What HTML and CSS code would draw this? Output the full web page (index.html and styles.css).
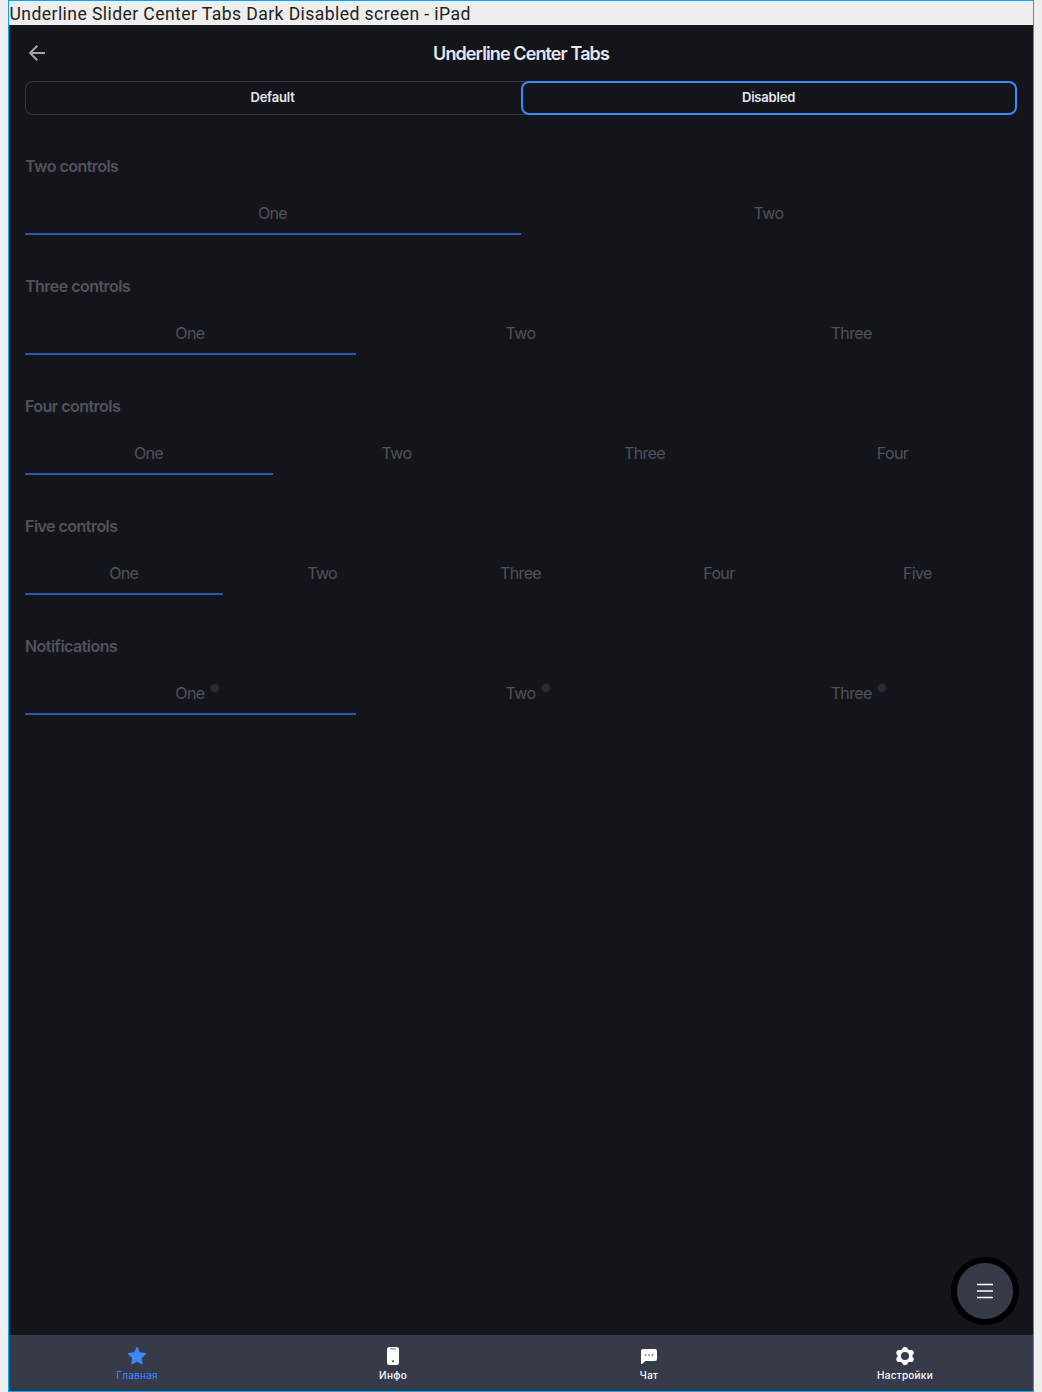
FILE: index.html
```html
<!DOCTYPE html>
<html lang="en">
<head>
<meta charset="utf-8">
<title>Underline Center Tabs</title>
<link rel="stylesheet" href="styles.css">
</head>
<body>
<div class="frame">
  <div class="frame-label"><span>Underline Slider Center Tabs Dark Disabled screen - iPad</span></div>
  <main class="screen">
    <header class="header">
      <svg class="back" viewBox="0 0 24 24" width="24" height="24"><path d="M20 12H5.500M12.300 4.800L5.100 12l7.200 7.200"/></svg>
      <h1 class="title"><span>Underline Center Tabs</span></h1>
    </header>
    <div class="segment">
      <div class="segment-item"><span>Default</span></div>
      <div class="segment-item active"><span>Disabled</span></div>
    </div>
    <section class="group">
      <h2 class="group-title"><span>Two controls</span></h2>
      <div class="tabs"><div class="tab selected"><span>One</span></div><div class="tab"><span>Two</span></div></div>
    </section>
    <section class="group">
      <h2 class="group-title"><span>Three controls</span></h2>
      <div class="tabs"><div class="tab selected"><span>One</span></div><div class="tab"><span>Two</span></div><div class="tab"><span>Three</span></div></div>
    </section>
    <section class="group">
      <h2 class="group-title"><span>Four controls</span></h2>
      <div class="tabs"><div class="tab selected"><span>One</span></div><div class="tab"><span>Two</span></div><div class="tab"><span>Three</span></div><div class="tab"><span>Four</span></div></div>
    </section>
    <section class="group">
      <h2 class="group-title"><span>Five controls</span></h2>
      <div class="tabs"><div class="tab selected"><span>One</span></div><div class="tab"><span>Two</span></div><div class="tab"><span>Three</span></div><div class="tab"><span>Four</span></div><div class="tab"><span>Five</span></div></div>
    </section>
    <section class="group">
      <h2 class="group-title"><span>Notifications</span></h2>
      <div class="tabs"><div class="tab selected"><span class="notify">One</span></div><div class="tab"><span class="notify">Two</span></div><div class="tab"><span class="notify">Three</span></div></div>
    </section>
    <div class="fab">
      <svg viewBox="0 0 24 24" width="24" height="24"><path d="M4 5.500h16M4 12h16M4 18.500h16"/></svg>
    </div>
  </main>
  <nav class="tabbar">
    <div class="nav-item current">
      <svg viewBox="0 0 24 24" width="24" height="24"><path d="M12 3.600l2.500 5.300 5.900.8-4.300 4.100 1 5.900L12 16.900l-5.100 2.800 1-5.900L3.600 9.700l5.900-.8z" fill="currentColor" stroke="currentColor" stroke-width="1.200" stroke-linejoin="round"/></svg>
      <span>Главная</span>
    </div>
    <div class="nav-item">
      <svg viewBox="0 0 24 24" width="24" height="24"><rect x="6" y="3" width="12" height="18" rx="2.500" fill="currentColor"/><path d="M9.500 4.800h5" stroke="#8b8d98" stroke-width="1.200" stroke-linecap="round"/><circle cx="12" cy="17.300" r="1" fill="#373a49"/></svg>
      <span>Инфо</span>
    </div>
    <div class="nav-item">
      <svg viewBox="0 0 24 24" width="24" height="24"><path d="M6 5h12a2 2 0 0 1 2 2v8a2 2 0 0 1-2 2H8.500l-3.200 2.800C4.700 20.300 4 20 4 19.200V7a2 2 0 0 1 2-2z" fill="currentColor"/><g fill="#373a49"><circle cx="8.500" cy="11" r=".8"/><circle cx="12" cy="11" r=".8"/><circle cx="15.500" cy="11" r=".8"/></g></svg>
      <span>Чат</span>
    </div>
    <div class="nav-item">
      <svg viewBox="0 0 24 24" width="24" height="24"><g fill="currentColor"><circle cx="12" cy="12" r="7.300"/><circle cx="12" cy="5.800" r="2.800"/><circle cx="17.800" cy="8.800" r="2.900"/><circle cx="17.800" cy="15.200" r="2.900"/><circle cx="12" cy="18.200" r="2.800"/><circle cx="6.200" cy="15.200" r="2.900"/><circle cx="6.200" cy="8.800" r="2.900"/></g><circle cx="12" cy="12" r="4" fill="#373a49"/></svg>
      <span>Настройки</span>
    </div>
  </nav>
</div>
</body>
</html>
```
FILE: styles.css
```css
* { box-sizing: border-box; }
body {
  margin: 0;
  padding: 0 8px;
  background: #eeeeee;
  font-family: Inter, "Liberation Sans", sans-serif;
}
.frame {
  display: flex;
  flex-direction: column;
  height: 1392px;
  border: 1px solid #00a8f5;
}
.frame-label {
  height: 24px;
  padding-left: 0.5px;
  font: 400 17.6px/27px Roboto, sans-serif;
  letter-spacing: 0.41px;
  color: #222222;
  white-space: nowrap;
}
.screen {
  position: relative;
  flex: 1;
  padding: 0 16px;
  background: #14151a;
}
.header {
  display: grid;
  grid-template-columns: 24px 1fr 24px;
  align-items: center;
  height: 56px;
}
.back {
  fill: none;
  stroke: #a2a4b1;
  stroke-width: 2;
}
.title {
  margin: 0;
  padding-top: 2px;
  text-align: center;
  font-size: 18px;
  line-height: 24px;
  font-weight: 600;
  letter-spacing: -0.89px;
  color: #e4e7f0;
}
.segment {
  display: flex;
  height: 34px;
  border-radius: 8px;
  box-shadow: inset 0 0 0 1px #343643;
}
.segment-item {
  flex: 1;
  padding-right: 1px;
  text-align: center;
  font-size: 13px;
  line-height: 33px;
  font-weight: 600;
  letter-spacing: -0.2px;
  color: #e4e7f0;
}
.segment-item.active {
  border-radius: 8px;
  background: #14151a;
  box-shadow: inset 0 0 0 2px #3f87fa;
}
.group {
  height: 120px;
  padding-top: 39px;
  color: #50525d;
}
.group-title {
  margin: 0;
  font-size: 16px;
  line-height: 24px;
  font-weight: 600;
  letter-spacing: -0.53px;
}
.tabs {
  display: flex;
  height: 48px;
  margin-top: 9px;
}
.tab {
  flex: 1;
  padding-right: 1px;
  text-align: center;
  font-size: 16px;
  line-height: 52px;
  letter-spacing: -0.65px;
}
.tab.selected { box-shadow: inset 0 -2px #275ba9; }
.notify { position: relative; }
.notify::after {
  content: "";
  position: absolute;
  left: calc(100% + 6.5px);
  top: 1px;
  width: 8px;
  height: 8px;
  border-radius: 50%;
  background: #292b36;
  box-shadow: 0 0 0 2px #181920;
}
.fab {
  position: absolute;
  right: 14px;
  bottom: 10px;
  display: grid;
  place-items: center;
  width: 68px;
  height: 68px;
  border: 6px solid #000000;
  border-radius: 50%;
  background: #373a49;
}
.fab svg {
  fill: none;
  stroke: #ffffff;
  stroke-width: 1.6;
}
.tabbar {
  display: flex;
  height: 56px;
  background: #373a49;
}
.nav-item {
  flex: 1;
  display: flex;
  flex-direction: column;
  align-items: center;
  padding-top: 9px;
  font-size: 10px;
  line-height: 14px;
  font-weight: 500;
  letter-spacing: 0.25px;
  color: #ffffff;
}
.nav-item.current {
  font-weight: 400;
  color: #3f87fa;
}
```
